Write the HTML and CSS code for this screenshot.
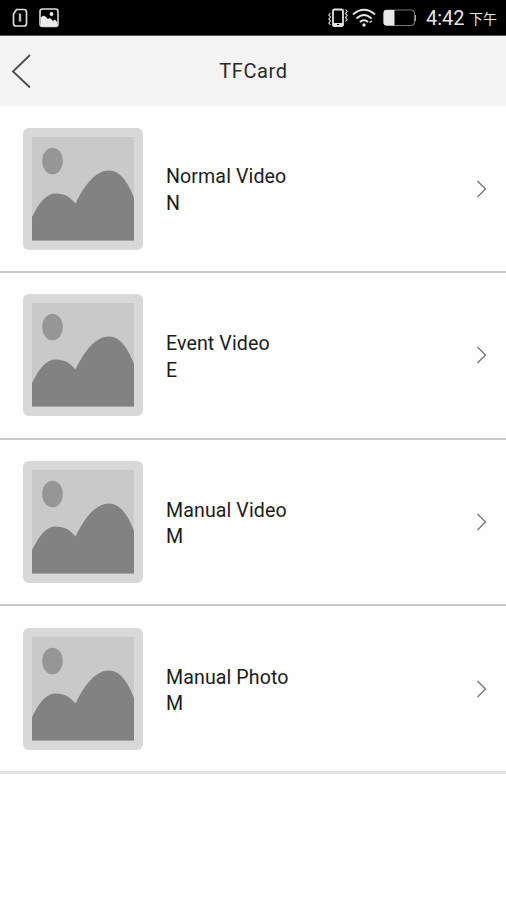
FILE: index.html
```html
<!DOCTYPE html>
<html lang="en">
<head>
<meta charset="utf-8">
<title>TFCard</title>
<link rel="stylesheet" href="styles.css">
</head>
<body>
<svg class="defs" width="0" height="0" aria-hidden="true">
  <symbol id="thumb" viewBox="0 0 120 122">
    <rect width="120" height="122" rx="6" fill="#d8d8d8"/>
    <rect x="9" y="9" width="102" height="104" fill="#c9c9c9"/>
    <ellipse cx="29.5" cy="33" rx="10.3" ry="13.3" fill="#969696"/>
    <path d="M9 89C17 73 24 65.500 32.500 65.500C42 65.500 47 69 52.500 75.500C62 56 73 42.500 86 42.500C97 42.500 105 54 111 70V112.500H9Z" fill="#828282"/>
  </symbol>
  <symbol id="chevron" viewBox="0 0 12 18">
    <path d="M1.500 1L9.500 9L1.500 17" fill="none" stroke="#777" stroke-width="1.400"/>
  </symbol>
</svg>
<header class="status">
  <div class="status-left">
    <svg width="16" height="20" viewBox="0 0 16 20" fill="none" stroke="#ddd"><path d="M4.500 1.500H12Q14.500 1.500 14.500 4V15.500Q14.500 18 12 18H4Q1.500 18 1.500 15.500V6Z" stroke-width="1.700"/><path d="M8 5.500V13.500" stroke-width="2.400" stroke="#bbb"/></svg>
    <svg width="20" height="20" viewBox="0 0 20 20"><rect x="1" y="1" width="18" height="17.500" rx="2.500" fill="none" stroke="#ddd" stroke-width="1.600"/><path d="M2 9L5 7.500L9 11L11 10L14 13L16 11.500L18 14V18H2Z" fill="#eee"/><circle cx="12.500" cy="6" r="1.900" fill="#eee"/></svg>
  </div>
  <div class="status-right">
    <svg class="vibrate" width="20" height="20" viewBox="0 0 20 20" fill="none" stroke="#e4e4e4"><rect x="5" y="1.500" width="10" height="16.500" rx="1.500" stroke-width="1.800"/><path d="M5 15.500H15V18H5Z" fill="#e4e4e4"/><path d="M9 16.500H11" stroke="#000"/><path d="M2.500 5L.8 7L2.500 9L.8 11L2.500 13L.8 15L2.500 17M17.500 1.500L19.200 3.500L17.500 5.500L19.200 7.500L17.500 9.500L19.200 11.500L17.500 13.500" stroke-width="1.100"/></svg>
    <svg class="wifi" width="24" height="20" viewBox="0 0 24 20" fill="none" stroke="#e8e8e8" stroke-width="2"><path d="M1 6.500Q12-3 23 6.500M4.500 10.500Q12 3.500 19.500 10.500M8 14Q12 10.500 16 14"/><circle cx="12" cy="17" r="1.700" fill="#e8e8e8" stroke="none"/><path d="M17.500 14.500L20 13" stroke-width="1.400"/></svg>
    <svg class="battery" width="34" height="18" viewBox="0 0 34 18"><rect x="1" y="1" width="30.500" height="15.500" rx="3.500" fill="none" stroke="#777" stroke-width="1.200"/><path d="M32.500 6V12" stroke="#aaa"/><path d="M3.500 1H11.500V16.500H3.500Q.5 16.500.5 13.500V4Q.5 1 3.500 1Z" fill="#e8e8e8"/></svg>
    <span class="time">4:42</span><span class="period">下午</span>
  </div>
</header>
<nav class="bar">
  <svg class="back" width="22" height="36" viewBox="0 0 22 36"><path d="M19 2L2 18.500L19 34.500" fill="none" stroke="#4b4b4b" stroke-width="1.800"/></svg>
  <h1>TFCard</h1>
</nav>
<main class="list">
  <section class="row"><svg class="thumb"><use href="#thumb"/></svg><div class="label"><p>Normal Video</p><p>N</p></div><svg class="go"><use href="#chevron"/></svg></section>
  <section class="row"><svg class="thumb"><use href="#thumb"/></svg><div class="label"><p>Event Video</p><p>E</p></div><svg class="go"><use href="#chevron"/></svg></section>
  <section class="row"><svg class="thumb"><use href="#thumb"/></svg><div class="label"><p>Manual Video</p><p>M</p></div><svg class="go"><use href="#chevron"/></svg></section>
  <section class="row"><svg class="thumb"><use href="#thumb"/></svg><div class="label"><p>Manual Photo</p><p>M</p></div><svg class="go"><use href="#chevron"/></svg></section>
</main>
</body>
</html>
```
FILE: styles.css
```css
* { box-sizing: border-box; }
body { margin: 0; background: #fefefe; color: #1c1c1c; font-family: Roboto, "Noto Sans CJK SC", sans-serif; }
svg { display: block; flex: none; }
.defs { position: absolute; }
.status { height: 36px; background: #000; border-bottom: 1px solid #555; color: #e6e6e6; display: flex; justify-content: space-between; align-items: center; padding: 0 9px 0 12px; }
.status-left { display: flex; gap: 11px; }
.status-right { display: flex; align-items: center; }
.vibrate { margin-right: -1px; }
.wifi { margin-left: 5px; }
.battery { margin-left: 7px; }
.time { width: 39px; margin-left: 9px; font-size: 20px; line-height: 24px; white-space: nowrap; }
.period { margin-left: 4px; font: 14px/20px "Noto Sans CJK SC", sans-serif; width: 28px; margin-top: 1px; }
.bar { height: 70px; background: #f4f4f4; display: grid; grid-template-columns: 1fr auto 1fr; align-items: center; padding: 0 12px; }
.back { margin-left: -1px; }
.bar h1 { margin: 0 0 0 1px; font-size: 20px; line-height: 24px; font-weight: 400; letter-spacing: .6px; color: #2a2a2a; }
.list { padding-top: .5px; }
.row { height: 166.670px; display: flex; align-items: center; padding: 0 18px 0 23px; border-bottom: 2px solid #cacaca; }
.row:last-child { height: 168px; border-bottom: 3px solid #e2e2e2; }
.thumb { width: 120px; height: 122px; }
.label { flex: 1; margin-left: 23px; padding-top: 4.500px; }
.label p { margin: 0; font-size: 19.600px; line-height: 26.700px; letter-spacing: .1px; }
.go { width: 12px; height: 18px; }
```
